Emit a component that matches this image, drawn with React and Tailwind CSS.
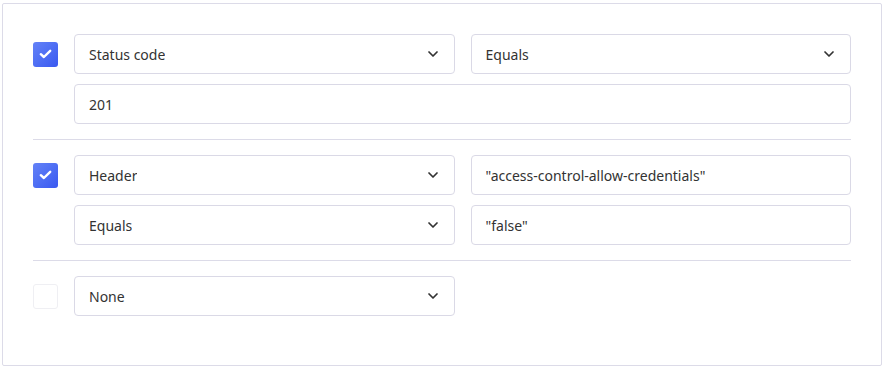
import { ChevronDown } from "lucide-react";

function Checkbox({ checked }) {
  if (!checked) {
    return <div className="w-[25px] h-[25px] rounded-[3px] border border-[#efeff3] bg-white shrink-0" />;
  }
  return (
    <div className="w-[25px] h-[25px] rounded-[3px] bg-gradient-to-br from-[#6482f7] to-[#3a58f0] flex items-center justify-center shrink-0">
      <svg width="13" height="10" viewBox="0 0 13 10" fill="none">
        <path d="M1.8 5.2 L4.9 8 L11.2 1.8" stroke="white" strokeWidth="2.4" strokeLinecap="round" strokeLinejoin="round" />
      </svg>
    </div>
  );
}

function Select({ label }) {
  return (
    <div className="min-w-0 h-10 border border-[#dad9e6] rounded-[4px] bg-white flex items-center justify-between pl-[14px] pr-[13px]">
      <span className="truncate">{label}</span>
      <ChevronDown size={16} strokeWidth={2.6} className="text-[#333] shrink-0" />
    </div>
  );
}

function Field({ value, className = "" }) {
  return (
    <div className={`min-w-0 h-10 border border-[#dad9e6] rounded-[4px] bg-white flex items-center pl-[14px] ${className}`}>
      <span className="truncate">{value}</span>
    </div>
  );
}

export default function App() {
  return (
    <div className="bg-white w-[887px] h-[368px] pt-[3px] pl-[2px]" style={{ fontFamily: '"Noto Sans", "Open Sans", sans-serif' }}>
      <div className="w-[880px] h-[363px] border border-[#dcdbe8] rounded-[2px] px-[30px] pt-[30px] text-[14px] text-[#333]">
        {/* Condition 1 */}
        <div className="flex gap-4">
          <div className="h-10 flex items-center">
            <Checkbox checked />
          </div>
          <div className="flex-1 min-w-0 grid grid-cols-2 gap-x-4 gap-y-[10px]">
            <Select label="Status code" />
            <Select label="Equals" />
            <Field value="201" className="col-span-2" />
          </div>
        </div>

        <div className="border-t border-[#dcdbe8] my-[15px]" />

        {/* Condition 2 */}
        <div className="flex gap-4">
          <div className="h-10 flex items-center">
            <Checkbox checked />
          </div>
          <div className="flex-1 min-w-0 grid grid-cols-2 gap-x-4 gap-y-[10px]">
            <Select label="Header" />
            <Field value={'"access-control-allow-credentials"'} />
            <Select label="Equals" />
            <Field value={'"false"'} />
          </div>
        </div>

        <div className="border-t border-[#dcdbe8] my-[15px]" />

        {/* Condition 3 */}
        <div className="flex gap-4">
          <div className="h-10 flex items-center">
            <Checkbox checked={false} />
          </div>
          <div className="flex-1 min-w-0 grid grid-cols-2 gap-x-4">
            <Select label="None" />
          </div>
        </div>
      </div>
    </div>
  );
}
